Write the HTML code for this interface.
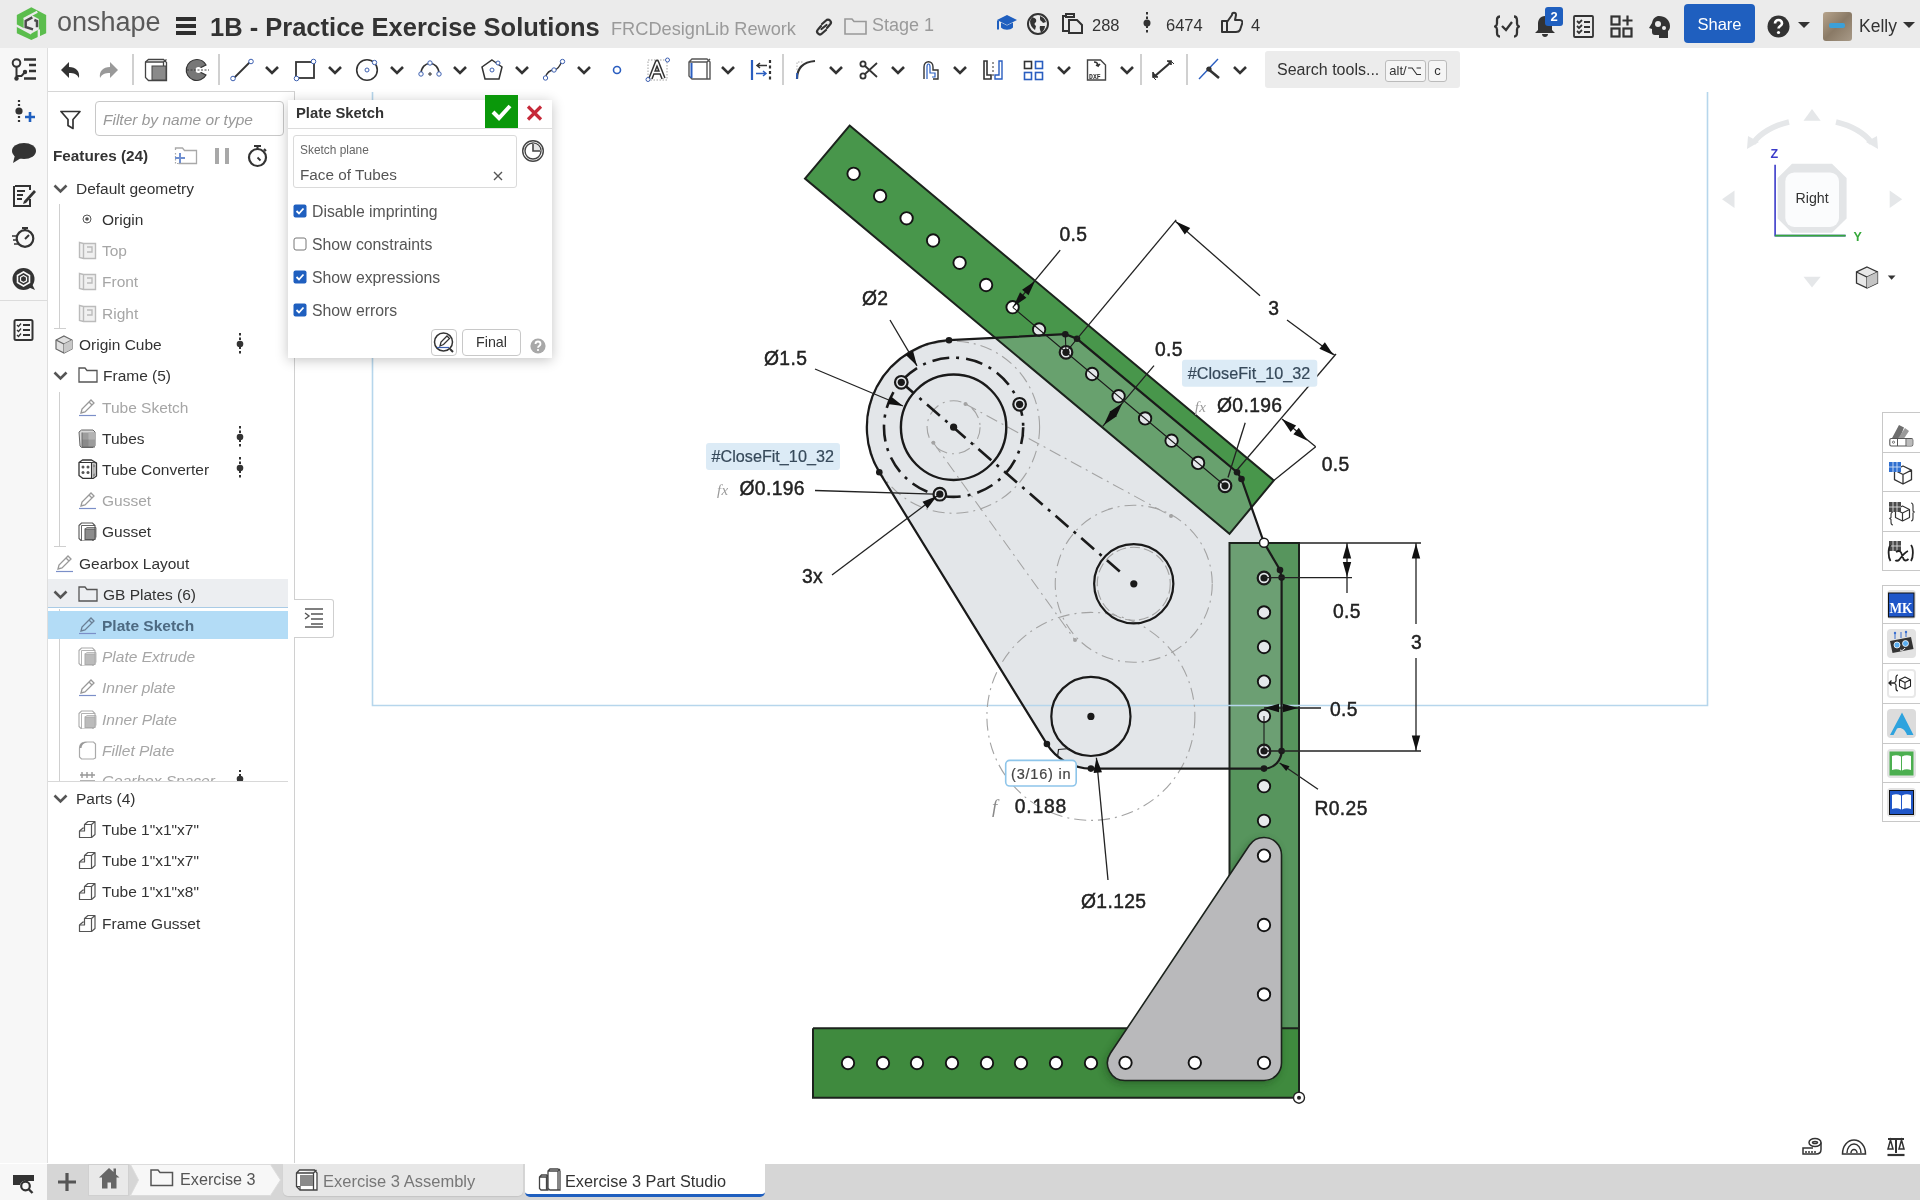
<!DOCTYPE html>
<html><head><meta charset="utf-8">
<style>
*{box-sizing:border-box;margin:0;padding:0}
html,body{width:1920px;height:1200px;overflow:hidden;background:#fff;font-family:"Liberation Sans",sans-serif;color:#333;position:relative}
.a{position:absolute}
#top{left:0;top:0;width:1920px;height:48px;background:#ebebeb}
#tb{left:48px;top:48px;width:1872px;height:44px;background:#fff}
.t{position:absolute;white-space:nowrap;line-height:1}
.row{position:absolute;font-size:15px;white-space:nowrap;line-height:1;color:#333}

.t,svg,.tx{will-change:transform}

</style></head><body>
<div id="top" class="a">
 <svg class="a" style="left:12px;top:4px" width="40" height="40" viewBox="0 0 1200 1200">
  <polygon points="580,95 1025,330 1025,880 580,1080 145,880 145,330" fill="#5bbd4d"/>
  <polygon points="580,330 805,450 805,765 580,885 350,765 350,450" fill="#ebebeb"/>
  <path d="M350,450 L760,235" stroke="#ebebeb" stroke-width="70"/>
  <path d="M580,885 L120,640" stroke="#ebebeb" stroke-width="70"/>
  <path d="M805,765 L805,1060" stroke="#ebebeb" stroke-width="70"/>
  <path d="M610,400 L410,510 L410,690 L630,760" fill="none" stroke="#4a4a4a" stroke-width="75"/>
  <path d="M670,480 L750,510 L750,700" fill="none" stroke="#4a4a4a" stroke-width="75"/>
 </svg>
 <div class="t" style="left:57px;top:9px;font-size:27px;color:#5a5a5a">onshape</div>
 <div class="a" style="left:176px;top:17px;width:20px;height:4px;background:#2e2e2e"></div>
 <div class="a" style="left:176px;top:24px;width:20px;height:4px;background:#2e2e2e"></div>
 <div class="a" style="left:176px;top:31px;width:20px;height:4px;background:#2e2e2e"></div>
 <div class="t" style="left:210px;top:15px;font-size:25.5px;font-weight:bold;color:#333">1B - Practice Exercise Solutions</div>
 <div class="t" style="left:611px;top:20px;font-size:18.2px;color:#9a9a9a">FRCDesignLib Rework</div>
 <svg class="a" style="left:814px;top:18px" width="20" height="18" viewBox="0 0 20 18"><g fill="none" stroke="#333" stroke-width="2.2" stroke-linecap="round"><path d="M8,6 L12,2.5 a2.8,2.8 0 0 1 4,4 L13,10"/><path d="M12,12 L8,15.5 a2.8,2.8 0 0 1 -4,-4 L7,8"/><path d="M7.5,11 L12.5,7"/></g></svg>
 <svg class="a" style="left:844px;top:17px" width="23" height="18" viewBox="0 0 23 18"><path d="M1,2 h7 l2,2.5 h12 v12.5 h-21 z" fill="none" stroke="#999" stroke-width="1.6"/></svg>
 <div class="t" style="left:872px;top:16px;font-size:18px;color:#9a9a9a">Stage 1</div>
 <svg class="a" style="left:996px;top:14px" width="22" height="19" viewBox="0 0 22 19"><path d="M11,1 L21,6 L11,11 L1,6 Z" fill="#1f5fbf"/><path d="M5,8.5 v5 c3,3 9,3 12,0 v-5 l-6,3 z" fill="#1f5fbf"/><path d="M2,6.5 v9" stroke="#1f5fbf" stroke-width="2"/></svg>
 <svg class="a" style="left:1026px;top:13px" width="24" height="22" viewBox="0 0 24 22"><circle cx="12" cy="11" r="10" fill="none" stroke="#333" stroke-width="2"/><path d="M6,4 c3,1 5,2 4,5 c-2,1 -2,3 0,4 l-1,4 c-3,-2 -5,-5 -5,-9z M14,3 c3,1 5,3 6,6 l-3,1 c-1,-2 -3,-2 -3,-4z M14,13 l5,0 c0,3 -2,5 -4,7 c0,-2 -2,-4 -1,-7z" fill="#333"/></svg>
 <svg class="a" style="left:1061px;top:12px" width="23" height="22" viewBox="0 0 23 22"><g fill="none" stroke="#333" stroke-width="2"><path d="M5,4 h-3 v15 h6"/><path d="M5,2 h8 v3 h-8 z"/><path d="M8,8 h8 l5,5 v8 h-13 z"/></g></svg>
 <div class="t" style="left:1092px;top:17px;font-size:16.5px;color:#333">288</div>
 <svg class="a" style="left:1142px;top:12px" width="10" height="22" viewBox="0 0 10 22"><path d="M5,0 v22" stroke="#333" stroke-width="2" stroke-dasharray="2.5,2"/><circle cx="5" cy="11" r="3.5" fill="#333"/></svg>
 <div class="t" style="left:1166px;top:17px;font-size:16.5px;color:#333">6474</div>
 <svg class="a" style="left:1220px;top:11px" width="23" height="23" viewBox="0 0 23 23"><path d="M2,10 h5 v11 h-5 z M7,11 l5,-7 c0,-3 4,-3 4,0 l-1,5 h5 c2,0 3,2 2,4 l-2,6 c-1,2 -2,2 -4,2 h-9" fill="none" stroke="#333" stroke-width="2" stroke-linejoin="round"/></svg>
 <div class="t" style="left:1251px;top:17px;font-size:16.5px;color:#333">4</div>
 <svg class="a" style="left:1494px;top:15px" width="26" height="23" viewBox="0 0 26 23"><g fill="none" stroke="#333" stroke-width="2.3"><path d="M6,1.5 c-3,0 -3,2 -3,4 v3 c0,2 -2,3 -2,3 c0,0 2,1 2,3 v3 c0,2 0,4 3,4"/><path d="M20,1.5 c3,0 3,2 3,4 v3 c0,2 2,3 2,3 c0,0 -2,1 -2,3 v3 c0,2 0,4 -3,4"/><path d="M8,11 l4,4 l6,-8"/></g></svg>
 <svg class="a" style="left:1534px;top:14px" width="22" height="24" viewBox="0 0 22 24"><path d="M11,2 c-5,0 -7,4 -7,8 v6 l-3,3 h20 l-3,-3 v-6 c0,-4 -2,-8 -7,-8z M8,20 c0,2 1.5,3 3,3 s3,-1 3,-3z" fill="#333"/></svg>
 <div class="a tx" style="left:1545px;top:7px;width:18px;height:19px;background:#1f5fbf;border-radius:3px;color:#fff;font-size:13px;font-weight:bold;text-align:center;line-height:19px">2</div>
 <svg class="a" style="left:1573px;top:15px" width="21" height="23" viewBox="0 0 21 23"><g fill="none" stroke="#333" stroke-width="1.8"><rect x="1" y="1" width="19" height="21" rx="1"/><path d="M4,6 l2,2 l3,-3 M11,7 h6 M4,11 l2,2 l3,-3 M11,12 h6 M4,16 l2,2 l3,-3 M11,17 h6"/></g></svg>
 <svg class="a" style="left:1610px;top:15px" width="24" height="23" viewBox="0 0 24 23"><g fill="none" stroke="#333" stroke-width="2.2"><rect x="1.5" y="1.5" width="8" height="8"/><rect x="1.5" y="13.5" width="8" height="8"/><rect x="13.5" y="13.5" width="8" height="8"/><path d="M17.5,0.5 v10 M12.5,5.5 h10"/></g></svg>
 <svg class="a" style="left:1648px;top:15px" width="24" height="24" viewBox="0 0 24 24"><path d="M11,1 c6,0 11,4 11,10 c0,3 -1,4 -2,5 v7 h-9 v-3 h-4 c-2,0 -3,-1 -3,-3 v-3 l-3,-1 l3,-5 c1,-5 4,-7 7,-7z" fill="#333"/><circle cx="10" cy="9" r="3" fill="#ebebeb"/><circle cx="16" cy="13" r="2" fill="#ebebeb"/></svg>
 <div class="a tx" style="left:1684px;top:4px;width:71px;height:39px;background:#1f5fbf;border-radius:4px;color:#fff;font-size:16.5px;line-height:41px;text-align:center">Share</div>
 <svg class="a" style="left:1767px;top:15px" width="23" height="23" viewBox="0 0 23 23"><circle cx="11.5" cy="11.5" r="11" fill="#333"/><path d="M8,8.5 c0,-2 1.5,-3.5 3.5,-3.5 s3.5,1.5 3.5,3.5 c0,2.5 -3.5,2.5 -3.5,5" fill="none" stroke="#fff" stroke-width="2.6"/><circle cx="11.5" cy="17.5" r="1.6" fill="#fff"/></svg>
 <svg class="a" style="left:1798px;top:22px" width="12" height="7" viewBox="0 0 12 7"><path d="M0,0 h12 l-6,6z" fill="#333"/></svg>
 <div class="a" style="left:1823px;top:12px;width:29px;height:29px;border-radius:3px;background:linear-gradient(135deg,#b7a48c 0%,#8a7a66 50%,#a89a88 100%)"><div class="a" style="left:6px;top:11px;width:16px;height:5px;background:#3ca0d8;border-radius:2px"></div></div>
 <div class="t" style="left:1859px;top:17.5px;font-size:17.5px;color:#333">Kelly</div>
 <svg class="a" style="left:1903px;top:22px" width="12" height="7" viewBox="0 0 12 7"><path d="M0,0 h12 l-6,6z" fill="#333"/></svg>
</div>

<div id="tb" class="a">
 <!-- separators -->
 <div class="a" style="left:84px;top:6px;width:2px;height:31px;background:#d0d0d0"></div>
 <div class="a" style="left:170px;top:6px;width:2px;height:31px;background:#d0d0d0"></div>
 <div class="a" style="left:734px;top:6px;width:2px;height:31px;background:#d0d0d0"></div>
 <div class="a" style="left:1092px;top:6px;width:2px;height:31px;background:#d0d0d0"></div>
 <div class="a" style="left:1138px;top:6px;width:2px;height:31px;background:#d0d0d0"></div>
</div>
<svg class="a" style="left:0;top:48px" width="1480" height="44" viewBox="0 48 1480 44">
 
 <!-- undo/redo -->
 <path d="M61,70 L69,62 L69,67 C76,67 80,71 79,78 C77,74 74,73 69,73 L69,78 Z" fill="#333"/>
 <path d="M118,70 L110,62 L110,67 C103,67 99,71 100,78 C102,74 105,73 110,73 L110,78 Z" fill="#999"/>
 <!-- extrude -->
 <g fill="none" stroke="#444" stroke-width="1.3"><path d="M145.5,62 l3,-2.5 h15 l3,3 v18 h-18 l-3,-3 z"/><path d="M145.5,62 h18 l3,-2.5 M163.5,62 v18"/></g>
 <rect x="152" y="66" width="14" height="14" fill="#8a8a8a" stroke="#444" stroke-width="1"/>
 <!-- revolve -->
 <path d="M197,59.5 a10.5,10.5 0 1 0 9,15.5 l-6,-3 a3,3 0 0 1 0,-4 l6,-3 a10.5,10.5 0 0 0 -9,-5.5z" fill="#777" stroke="#333" stroke-width="1.2"/>
 <circle cx="198.5" cy="70" r="3" fill="#fff"/><path d="M187,70 h22" stroke="#333" stroke-width="0.9" stroke-dasharray="2,1.5"/>
 <!-- line -->
 <path d="M233,79 L251,61" stroke="#333" stroke-width="1.8"/><circle cx="233" cy="78.5" r="2.3" fill="#fff" stroke="#3c5fb0" stroke-width="1"/><circle cx="251" cy="61.5" r="2.3" fill="#fff" stroke="#3c5fb0" stroke-width="1"/>
 <path d="M266,67 L272,73 L278,67" fill="none" stroke="#333" stroke-width="2.6"/>
 <!-- rect -->
 <rect x="296" y="62" width="18" height="16" fill="none" stroke="#333" stroke-width="1.8"/><circle cx="296.5" cy="78.5" r="2.3" fill="#fff" stroke="#3c5fb0" stroke-width="1"/><circle cx="313.5" cy="61.5" r="2.3" fill="#fff" stroke="#3c5fb0" stroke-width="1"/>
 <path d="M329,67 L335,73 L341,67" fill="none" stroke="#333" stroke-width="2.6"/>
 <!-- circle -->
 <circle cx="367" cy="70" r="10.3" fill="none" stroke="#333" stroke-width="1.6"/><circle cx="367" cy="70" r="2" fill="none" stroke="#3c5fb0" stroke-width="1"/><circle cx="374.5" cy="62.5" r="2.2" fill="#fff" stroke="#3c5fb0" stroke-width="1"/>
 <path d="M391,67 L397,73 L403,67" fill="none" stroke="#333" stroke-width="2.6"/>
 <!-- arc -->
 <path d="M421,74 C421,60 439,60 439,74" fill="none" stroke="#333" stroke-width="1.6"/><circle cx="421" cy="74" r="2.2" fill="#fff" stroke="#3c5fb0" stroke-width="1"/><circle cx="439" cy="74" r="2.2" fill="#fff" stroke="#3c5fb0" stroke-width="1"/><circle cx="430" cy="63" r="2.2" fill="#fff" stroke="#3c5fb0" stroke-width="1"/><path d="M430,72 v4 M428,74 h4" stroke="#333" stroke-width="1"/>
 <path d="M454,67 L460,73 L466,67" fill="none" stroke="#333" stroke-width="2.6"/>
 <!-- polygon -->
 <path d="M492,60 L502,67 L499,79 L485,79 L482,67 Z" fill="none" stroke="#333" stroke-width="1.5"/><circle cx="492" cy="70" r="2" fill="none" stroke="#3c5fb0" stroke-width="1"/><circle cx="498" cy="63" r="2" fill="#fff" stroke="#3c5fb0" stroke-width="1"/>
 <path d="M516,67 L522,73 L528,67" fill="none" stroke="#333" stroke-width="2.6"/>
 <!-- spline -->
 <path d="M545,78 C547,72 550,70 554,70 C558,70 560,66 562,61" fill="none" stroke="#333" stroke-width="1.4"/><circle cx="545.5" cy="78" r="2.2" fill="#fff" stroke="#3c5fb0" stroke-width="1"/><circle cx="554" cy="70" r="2.2" fill="#fff" stroke="#3c5fb0" stroke-width="1"/><circle cx="562.5" cy="61.5" r="2.2" fill="#fff" stroke="#3c5fb0" stroke-width="1"/>
 <path d="M578,67 L584,73 L590,67" fill="none" stroke="#333" stroke-width="2.6"/>
 <!-- point -->
 <circle cx="617" cy="70" r="3.5" fill="none" stroke="#2a5ec0" stroke-width="1.6"/>
 <!-- text A -->
 <rect x="648" y="60" width="19" height="20" fill="none" stroke="#888" stroke-width="0.8" stroke-dasharray="1.5,1.5"/>
 <path d="M650.5,78.5 L657,62 L663.5,78.5 M653.5,72.5 h7" fill="none" stroke="#333" stroke-width="4.6" stroke-linejoin="round"/><path d="M650.5,78.5 L657,62 L663.5,78.5 M653.5,72.5 h7" fill="none" stroke="#fff" stroke-width="1.6" stroke-linejoin="round"/>
 <circle cx="648" cy="79.5" r="2" fill="#fff" stroke="#3c5fb0" stroke-width="1"/><circle cx="667.5" cy="60" r="2" fill="#fff" stroke="#3c5fb0" stroke-width="1"/>
 <!-- construction/box -->
 <path d="M689,62 l3,-3 h15 l3,3 v17 h-18 l-3,-3z M689,62 h18 l3,-3 M707,62 v17" fill="none" stroke="#555" stroke-width="1.4"/><path d="M691.5,63 v15" stroke="#2a5ec0" stroke-width="2"/>
 <path d="M722,67 L728,73 L734,67" fill="none" stroke="#333" stroke-width="2.6"/>
 <!-- offset -->
 <path d="M752,60 v20" stroke="#2a5ec0" stroke-width="2.2"/><path d="M770,60 v20" stroke="#333" stroke-width="2.2" stroke-dasharray="3,2.5"/><path d="M767,65.5 h-9 M760,63 l-3,2.5 l3,2.5" fill="none" stroke="#333" stroke-width="1.5"/><path d="M756,73.5 h9 M763,71 l3,2.5 l-3,2.5" fill="none" stroke="#2a5ec0" stroke-width="1.5"/>
 <!-- fillet -->
 <path d="M797,79 C797,68 803,62 815,61" fill="none" stroke="#333" stroke-width="2.2"/><path d="M797,73 v6" stroke="#2a5ec0" stroke-width="1.6"/><path d="M797,70 v-8 h6" fill="none" stroke="#999" stroke-width="0.8" stroke-dasharray="1.5,1.5"/>
 <path d="M830,67 L836,73 L842,67" fill="none" stroke="#333" stroke-width="2.6"/>
 <!-- trim scissors -->
 <g fill="none" stroke="#333" stroke-width="1.8"><circle cx="863" cy="64" r="2.6"/><circle cx="863" cy="76" r="2.6"/><path d="M865,66 L877,77 M865,74 L877,63"/></g>
 <path d="M892,67 L898,73 L904,67" fill="none" stroke="#333" stroke-width="2.6"/>
 <!-- extend -->
 <path d="M924,79 v-12 c0,-7 9,-7 9,0 v3 h5 v9 h-5" fill="none" stroke="#333" stroke-width="1.4"/><path d="M927,79 v-12 c0,-4 3,-4 3,0 v6 h5 v4 h-3" fill="none" stroke="#2a5ec0" stroke-width="1.2"/>
 <path d="M954,67 L960,73 L966,67" fill="none" stroke="#333" stroke-width="2.6"/>
 <!-- mirror -->
 <path d="M984,61 h3 v14 h4 v4 h-7 z" fill="none" stroke="#333" stroke-width="1.6"/><path d="M1002,61 h-3 v14 h-4 v4 h7 z" fill="none" stroke="#2a5ec0" stroke-width="1.4"/><path d="M993,62 v16" stroke="#333" stroke-width="1" stroke-dasharray="2,2"/>
 <!-- pattern -->
 <g fill="none" stroke-width="1.6"><rect x="1024.5" y="61.5" width="7" height="7" stroke="#333"/><rect x="1035.5" y="61.5" width="7" height="7" stroke="#2a5ec0"/><rect x="1024.5" y="72.5" width="7" height="7" stroke="#2a5ec0"/><rect x="1035.5" y="72.5" width="7" height="7" stroke="#2a5ec0"/></g>
 <path d="M1058,67 L1064,73 L1070,67" fill="none" stroke="#333" stroke-width="2.6"/>
 <!-- dxf -->
 <path d="M1087.5,60 h13 l5,5 v15 h-18 z" fill="#fff" stroke="#444" stroke-width="1.4"/><path d="M1094,62 c2,0 4,1 4,4 l-2,-1 M1098,66 l2,-2" fill="none" stroke="#333" stroke-width="1.6"/><text x="1089" y="78.5" font-size="6.5" font-weight="bold" font-family="Liberation Mono" fill="#333">DXF</text>
 <path d="M1121,67 L1127,73 L1133,67" fill="none" stroke="#333" stroke-width="2.6"/>
 <!-- dimension -->
 <path d="M1155,76 L1170,63" stroke="#333" stroke-width="2.2"/><path d="M1153,72 v5 h5 M1167,61 h4 v4" fill="#333" stroke="#333" stroke-width="1.6"/><path d="M1153,77 l3,3 M1171,61 l3,3" stroke="#333" stroke-width="1"/>
 <!-- constraint -->
 <path d="M1199,79 L1218,59" stroke="#2a5ec0" stroke-width="1.4"/><path d="M1207,68 L1219,78" stroke="#333" stroke-width="2.6"/><circle cx="1209" cy="69" r="2.6" fill="#333"/>
 <path d="M1234,67 L1240,73 L1246,67" fill="none" stroke="#333" stroke-width="2.6"/>
</svg>
<div class="a" style="left:1265px;top:51px;width:195px;height:37px;background:#ececec;border-radius:3px"></div>
<div class="t" style="left:1277px;top:62px;font-size:16px;color:#333">Search tools...</div>
<div class="a tx" style="left:1385px;top:60px;width:41px;height:22px;border:1px solid #bbb;border-radius:3px;background:#f5f5f5;font-size:13px;color:#333;line-height:20px;text-align:center">alt/&#x2325;</div>
<div class="a tx" style="left:1428px;top:60px;width:19px;height:22px;border:1px solid #bbb;border-radius:3px;background:#f5f5f5;font-size:13px;color:#333;line-height:20px;text-align:center">c</div>
<svg class="a" style="left:0;top:0" width="1920" height="1200" viewBox="0 0 1920 1200" font-family="Liberation Sans">
<defs><clipPath id="cp"><path d="M949,340.2 L1065.3,334.2 L1077,338.8 L1237,472.25 L1241.5,479 L1264,542.75 L1280,570 L1281.6,577.6 L1281.6,751 A17.6,17.6 0 0 1 1264,768.6 L1090.9,768.6 A52.3,52.3 0 0 1 1046.6,743.7 L879.3,472.2 A87.2,87.2 0 0 1 949,340.2 Z"/></clipPath>
<clipPath id="tc"><rect x="1229.5" y="543" width="69.5" height="485.3"/><rect x="813" y="1028.3" width="486" height="69.4"/></clipPath>
<filter id="sh" x="-20%" y="-20%" width="140%" height="140%"><feGaussianBlur stdDeviation="4"/></filter></defs>
<path d="M949,340.2 L1065.3,334.2 L1077,338.8 L1237,472.25 L1241.5,479 L1264,542.75 L1280,570 L1281.6,577.6 L1281.6,751 A17.6,17.6 0 0 1 1264,768.6 L1090.9,768.6 A52.3,52.3 0 0 1 1046.6,743.7 L879.3,472.2 A87.2,87.2 0 0 1 949,340.2 Z" fill="#e3e6e9"/>
<polygon points="849.6,125.6 1273.8,480.5 1229.5,533.8 805.0,178.6" fill="#48964b"/>
<rect x="1229.5" y="543" width="69.5" height="485.3" fill="#57955d"/>
<rect x="813" y="1028.3" width="486" height="69.4" fill="#3f8a3e"/>
<g clip-path="url(#cp)"><polygon points="849.6,125.6 1273.8,480.5 1229.5,533.8 805.0,178.6" fill="#68a16e"/><rect x="1229.5" y="543" width="69.5" height="485.3" fill="#6c9f73"/></g>
<polygon points="849.6,125.6 1273.8,480.5 1229.5,533.8 805.0,178.6" fill="none" stroke="#1c231d" stroke-width="2"/>
<path d="M1229.5,1028.3 V543 H1299 V1097.7" fill="none" stroke="#1c231d" stroke-width="2"/>
<path d="M813,1028.3 H1299 M813,1028.3 V1097.7 H1299" fill="none" stroke="#1c231d" stroke-width="2"/>
<circle cx="853.6" cy="173.8" r="6.2" fill="#fff" stroke="#141414" stroke-width="1.9"/>
<circle cx="880.1" cy="196.0" r="6.2" fill="#fff" stroke="#141414" stroke-width="1.9"/>
<circle cx="906.6" cy="218.3" r="6.2" fill="#fff" stroke="#141414" stroke-width="1.9"/>
<circle cx="933.1" cy="240.5" r="6.2" fill="#fff" stroke="#141414" stroke-width="1.9"/>
<circle cx="959.6" cy="262.8" r="6.2" fill="#fff" stroke="#141414" stroke-width="1.9"/>
<circle cx="986.1" cy="285.0" r="6.2" fill="#fff" stroke="#141414" stroke-width="1.9"/>
<circle cx="1012.6" cy="307.2" r="6.2" fill="#fff" stroke="#141414" stroke-width="1.9"/>
<circle cx="1039.1" cy="329.5" r="6.2" fill="#e4e7ea" stroke="#141414" stroke-width="1.9"/>
<circle cx="1092.1" cy="374.0" r="6.2" fill="#e4e7ea" stroke="#141414" stroke-width="1.9"/>
<circle cx="1118.6" cy="396.2" r="6.2" fill="#e4e7ea" stroke="#141414" stroke-width="1.9"/>
<circle cx="1145.1" cy="418.4" r="6.2" fill="#e4e7ea" stroke="#141414" stroke-width="1.9"/>
<circle cx="1171.6" cy="440.7" r="6.2" fill="#e4e7ea" stroke="#141414" stroke-width="1.9"/>
<circle cx="1198.1" cy="462.9" r="6.2" fill="#e4e7ea" stroke="#141414" stroke-width="1.9"/>
<circle cx="1264.0" cy="612.4" r="6.2" fill="#e4e7ea" stroke="#141414" stroke-width="1.9"/>
<circle cx="1264.0" cy="647.0" r="6.2" fill="#e4e7ea" stroke="#141414" stroke-width="1.9"/>
<circle cx="1264.0" cy="681.6" r="6.2" fill="#e4e7ea" stroke="#141414" stroke-width="1.9"/>
<circle cx="1264.0" cy="716.0" r="6.2" fill="#e4e7ea" stroke="#141414" stroke-width="1.9"/>
<circle cx="1264.0" cy="786.2" r="6.2" fill="#e8eaec" stroke="#141414" stroke-width="1.9"/>
<circle cx="1264.0" cy="820.8" r="6.2" fill="#e8eaec" stroke="#141414" stroke-width="1.9"/>
<circle cx="848.0" cy="1063.0" r="6.2" fill="#fff" stroke="#141414" stroke-width="1.9"/>
<circle cx="883.0" cy="1063.0" r="6.2" fill="#fff" stroke="#141414" stroke-width="1.9"/>
<circle cx="917.0" cy="1063.0" r="6.2" fill="#fff" stroke="#141414" stroke-width="1.9"/>
<circle cx="952.0" cy="1063.0" r="6.2" fill="#fff" stroke="#141414" stroke-width="1.9"/>
<circle cx="987.0" cy="1063.0" r="6.2" fill="#fff" stroke="#141414" stroke-width="1.9"/>
<circle cx="1021.0" cy="1063.0" r="6.2" fill="#fff" stroke="#141414" stroke-width="1.9"/>
<circle cx="1056.0" cy="1063.0" r="6.2" fill="#fff" stroke="#141414" stroke-width="1.9"/>
<circle cx="1091.0" cy="1063.0" r="6.2" fill="#fff" stroke="#141414" stroke-width="1.9"/>
<g clip-path="url(#tc)"><path d="M1264,837.5 A17.5,17.5 0 0 1 1281.5,855 V1063 A17.5,17.5 0 0 1 1264,1080.5 H1125 A17.5,17.5 0 0 1 1110.4,1053.3 L1249.4,845.3 A17.5,17.5 0 0 1 1264,837.5 Z" fill="#163d16" opacity="0.45" filter="url(#sh)" transform="translate(-2,3)"/></g>
<path d="M1264,837.5 A17.5,17.5 0 0 1 1281.5,855 V1063 A17.5,17.5 0 0 1 1264,1080.5 H1125 A17.5,17.5 0 0 1 1110.4,1053.3 L1249.4,845.3 A17.5,17.5 0 0 1 1264,837.5 Z" fill="#b9b9bb" stroke="#1c231d" stroke-width="1.6"/>
<circle cx="1264.0" cy="855.6" r="6.2" fill="#fff" stroke="#141414" stroke-width="1.9"/>
<circle cx="1264.0" cy="925.0" r="6.2" fill="#fff" stroke="#141414" stroke-width="1.9"/>
<circle cx="1264.0" cy="994.4" r="6.2" fill="#fff" stroke="#141414" stroke-width="1.9"/>
<circle cx="1125.5" cy="1062.8" r="6.2" fill="#fff" stroke="#141414" stroke-width="1.9"/>
<circle cx="1194.8" cy="1062.8" r="6.2" fill="#fff" stroke="#141414" stroke-width="1.9"/>
<circle cx="1264.0" cy="1062.8" r="6.2" fill="#fff" stroke="#141414" stroke-width="1.9"/>
<circle cx="1299" cy="1097.7" r="5.5" fill="#fff" stroke="#222" stroke-width="1.4"/><circle cx="1299" cy="1097.7" r="2" fill="#222"/>
<path d="M372.5,92 V705.5 H1707.5 V92" fill="none" stroke="#b6d6ec" stroke-width="1.6"/>
<circle cx="953.6" cy="427.25" r="86" fill="none" stroke="#a3a3a3" stroke-width="1.1" stroke-dasharray="12,5,2,5"/>
<circle cx="953.6" cy="427.25" r="26.5" fill="none" stroke="#a3a3a3" stroke-width="1.1" stroke-dasharray="12,5,2,5"/>
<circle cx="1133.75" cy="583.75" r="78.5" fill="none" stroke="#a3a3a3" stroke-width="1.1" stroke-dasharray="12,5,2,5"/>
<circle cx="1133.75" cy="583.75" r="36.5" fill="none" stroke="#a3a3a3" stroke-width="1.1" stroke-dasharray="10,4"/>
<circle cx="1090.9" cy="716.4" r="104" fill="none" stroke="#a3a3a3" stroke-width="1.1" stroke-dasharray="12,5,2,5"/>
<path d="M965.5,404 L1171,516" fill="none" stroke="#a3a3a3" stroke-width="1.1" stroke-dasharray="12,5,2,5"/>
<path d="M933.4,442.8 L1075,640" fill="none" stroke="#a3a3a3" stroke-width="1.1" stroke-dasharray="12,5,2,5"/>
<circle cx="1171" cy="516" r="2" fill="#a3a3a3"/><circle cx="965.5" cy="404" r="2" fill="#a3a3a3"/><circle cx="933.4" cy="442.8" r="2" fill="#a3a3a3"/><circle cx="1075" cy="640" r="2" fill="#a3a3a3"/>
<path d="M949,340.2 L1065.3,334.2 L1077,338.8 L1237,472.25 L1241.5,479 L1264,542.75 L1280,570 L1281.6,577.6 L1281.6,751 A17.6,17.6 0 0 1 1264,768.6 L1090.9,768.6 A52.3,52.3 0 0 1 1046.6,743.7 L879.3,472.2 A87.2,87.2 0 0 1 949,340.2 Z" fill="none" stroke="#1a1a1a" stroke-width="2.2"/>
<circle cx="953.6" cy="427.25" r="52.7" fill="none" stroke="#1a1a1a" stroke-width="2.4"/>
<circle cx="953.6" cy="427.25" r="69.6" fill="none" stroke="#1a1a1a" stroke-width="2.6" stroke-dasharray="17,7,3,7"/>
<circle cx="1133.75" cy="583.75" r="39.6" fill="none" stroke="#1a1a1a" stroke-width="2.2"/>
<circle cx="1090.9" cy="716.4" r="39.6" fill="none" stroke="#1a1a1a" stroke-width="2.2"/>
<path d="M901.3,382.3 L1125,576" fill="none" stroke="#1a1a1a" stroke-width="2.6" stroke-dasharray="17,7,3,7"/>
<circle cx="953.6" cy="427.2" r="3.6" fill="#1a1a1a"/>
<circle cx="1133.8" cy="583.8" r="3.6" fill="#1a1a1a"/>
<circle cx="1090.9" cy="716.4" r="3.6" fill="#1a1a1a"/>
<circle cx="901.3" cy="382.3" r="6.3" fill="#e4e7ea" stroke="#1a1a1a" stroke-width="2.2"/><circle cx="901.3" cy="382.3" r="3.6" fill="#1a1a1a"/>
<circle cx="1019.6" cy="404.3" r="6.3" fill="#e4e7ea" stroke="#1a1a1a" stroke-width="2.2"/><circle cx="1019.6" cy="404.3" r="3.6" fill="#1a1a1a"/>
<circle cx="939.8" cy="494.2" r="6.3" fill="#e4e7ea" stroke="#1a1a1a" stroke-width="2.2"/><circle cx="939.8" cy="494.2" r="3.6" fill="#1a1a1a"/>
<circle cx="1066.0" cy="352.3" r="6.3" fill="#e4e7ea" stroke="#1a1a1a" stroke-width="2.2"/><circle cx="1066.0" cy="352.3" r="3.6" fill="#1a1a1a"/>
<circle cx="1225.0" cy="485.8" r="6.3" fill="#e4e7ea" stroke="#1a1a1a" stroke-width="2.2"/><circle cx="1225.0" cy="485.8" r="3.6" fill="#1a1a1a"/>
<circle cx="1264.0" cy="578.0" r="6.3" fill="#e4e7ea" stroke="#1a1a1a" stroke-width="2.2"/><circle cx="1264.0" cy="578.0" r="3.6" fill="#1a1a1a"/>
<circle cx="1264.0" cy="751.0" r="6.3" fill="#e4e7ea" stroke="#1a1a1a" stroke-width="2.2"/><circle cx="1264.0" cy="751.0" r="3.6" fill="#1a1a1a"/>
<path d="M1012.8,307.3 L1225,485.75" fill="none" stroke="#1a1a1a" stroke-width="1.1"/>
<path d="M1264,716 V751" fill="none" stroke="#1a1a1a" stroke-width="1.1"/>
<path d="M1065.3,334.2 L1066,352.3 L1077,338.8" fill="none" stroke="#1a1a1a" stroke-width="1.1"/>
<circle cx="949.0" cy="340.2" r="3.3" fill="#1a1a1a"/>
<circle cx="879.3" cy="472.2" r="3.3" fill="#1a1a1a"/>
<circle cx="1065.3" cy="334.2" r="3.3" fill="#1a1a1a"/>
<circle cx="1077.0" cy="338.8" r="3.3" fill="#1a1a1a"/>
<circle cx="1237.0" cy="472.2" r="3.3" fill="#1a1a1a"/>
<circle cx="1241.5" cy="479.0" r="3.3" fill="#1a1a1a"/>
<circle cx="1280.0" cy="570.0" r="3.3" fill="#1a1a1a"/>
<circle cx="1281.6" cy="577.6" r="3.3" fill="#1a1a1a"/>
<circle cx="1281.6" cy="751.0" r="3.3" fill="#1a1a1a"/>
<circle cx="1264.0" cy="768.6" r="3.3" fill="#1a1a1a"/>
<circle cx="1090.9" cy="768.6" r="3.3" fill="#1a1a1a"/>
<circle cx="1046.9" cy="744.0" r="3.3" fill="#1a1a1a"/>
<circle cx="1264" cy="542.75" r="4.5" fill="#fff" stroke="#1a1a1a" stroke-width="1.5"/>
<path d="M1057.5,757 L1058.5,749.5 L1070,748.5" fill="none" stroke="#222" stroke-width="1.2"/>
<path d="M1060.2,250.2 L1012.8,307.3" fill="none" stroke="#222" stroke-width="1.3"/>
<polygon points="1013.5,306.5 1020.0,292.3 1026.4,297.7" fill="#111"/><polygon points="1035.0,281.0 1028.5,295.2 1022.1,289.8" fill="#111"/>
<path d="M1077.0,338.8 L1176.2,219.8" fill="none" stroke="#222" stroke-width="1.3"/>
<path d="M1336.0,354.0 L1237.0,470.0" fill="none" stroke="#222" stroke-width="1.3"/>
<path d="M1175.0,221.0 L1260.0,295.7" fill="none" stroke="#222" stroke-width="1.3"/><path d="M1287.0,320.0 L1334.8,355.2" fill="none" stroke="#222" stroke-width="1.3"/>
<polygon points="1176.0,221.5 1190.2,227.9 1184.8,234.4" fill="#111"/><polygon points="1333.6,355.2 1319.4,348.7 1324.9,342.3" fill="#111"/>
<path d="M1154.0,365.7 L1102.7,426.3" fill="none" stroke="#222" stroke-width="1.3"/>
<polygon points="1103.8,425.0 1110.3,410.9 1116.7,416.3" fill="#111"/><polygon points="1122.5,403.0 1116.0,417.1 1109.6,411.7" fill="#111"/>
<path d="M1315.7,446.8 L1273.8,480.5" fill="none" stroke="#222" stroke-width="1.3"/>
<path d="M1282.0,419.0 L1315.7,446.8" fill="none" stroke="#222" stroke-width="1.3"/>
<polygon points="1282.0,419.0 1296.1,425.5 1290.7,431.9" fill="#111"/><polygon points="1307.5,440.8 1293.4,434.2 1298.8,427.8" fill="#111"/>
<path d="M1245.2,422.8 L1228.0,477.5" fill="none" stroke="#222" stroke-width="1.3"/>
<path d="M890.0,320.0 L917.0,365.8" fill="none" stroke="#222" stroke-width="1.3"/><polygon points="917.0,365.8 905.8,355.0 913.0,350.7" fill="#111"/>
<path d="M815.0,369.0 L903.0,406.0" fill="none" stroke="#222" stroke-width="1.3"/><polygon points="903.0,406.0 887.5,404.1 890.8,396.3" fill="#111"/>
<path d="M815.0,490.5 L934.3,494.2" fill="none" stroke="#222" stroke-width="1.3"/>
<path d="M832.0,575.0 L937.0,496.0" fill="none" stroke="#222" stroke-width="1.3"/><polygon points="937.0,496.0 927.5,508.4 922.5,501.7" fill="#111"/>
<path d="M1299.0,543.0 L1421.0,543.0" fill="none" stroke="#222" stroke-width="1.3"/>
<path d="M1264.0,577.6 L1352.0,577.6" fill="none" stroke="#222" stroke-width="1.3"/>
<path d="M1264.0,751.0 L1421.0,751.0" fill="none" stroke="#222" stroke-width="1.3"/>
<path d="M1347.0,543.0 L1347.0,593.0" fill="none" stroke="#222" stroke-width="1.3"/>
<polygon points="1347.0,543.5 1351.2,558.5 1342.8,558.5" fill="#111"/><polygon points="1347.0,577.0 1342.8,562.0 1351.2,562.0" fill="#111"/>
<path d="M1416.0,543.0 L1416.0,624.0" fill="none" stroke="#222" stroke-width="1.3"/><path d="M1416.0,658.0 L1416.0,751.0" fill="none" stroke="#222" stroke-width="1.3"/>
<polygon points="1416.0,543.5 1420.2,558.5 1411.8,558.5" fill="#111"/><polygon points="1416.0,750.5 1411.8,735.5 1420.2,735.5" fill="#111"/>
<path d="M1264.0,708.0 L1321.0,708.0" fill="none" stroke="#222" stroke-width="1.3"/>
<polygon points="1264.0,708.0 1279.0,703.8 1279.0,712.2" fill="#111"/><polygon points="1298.0,708.0 1283.0,712.2 1283.0,703.8" fill="#111"/>
<path d="M1279.6,763.0 L1318.0,789.3" fill="none" stroke="#222" stroke-width="1.3"/><polygon points="1279.6,763.0 1289.5,766.2 1286.2,771.1" fill="#111"/>
<path d="M1096.4,757.7 L1108.0,880.0" fill="none" stroke="#222" stroke-width="1.3"/><polygon points="1096.4,757.7 1102.0,772.2 1093.6,773.0" fill="#111"/>
<text x="1059.5" y="240.6" font-size="19.3" fill="#222" letter-spacing="0.35" stroke="#222" stroke-width="0.45" >0.5</text>
<text x="1268.3" y="315.3" font-size="19.3" fill="#222" letter-spacing="0.35" stroke="#222" stroke-width="0.45" >3</text>
<text x="1155.0" y="355.7" font-size="19.3" fill="#222" letter-spacing="0.35" stroke="#222" stroke-width="0.45" >0.5</text>
<text x="1321.8" y="470.5" font-size="19.3" fill="#222" letter-spacing="0.35" stroke="#222" stroke-width="0.45" >0.5</text>
<text x="862.0" y="304.5" font-size="19.3" fill="#222" letter-spacing="0.35" stroke="#222" stroke-width="0.45" >&#216;2</text>
<text x="764.0" y="364.5" font-size="19.3" fill="#222" letter-spacing="0.35" stroke="#222" stroke-width="0.45" >&#216;1.5</text>
<text x="802.0" y="582.5" font-size="19.3" fill="#222" letter-spacing="0.35" stroke="#222" stroke-width="0.45" >3x</text>
<text x="1333.0" y="617.9" font-size="19.3" fill="#222" letter-spacing="0.35" stroke="#222" stroke-width="0.45" >0.5</text>
<text x="1411.0" y="648.5" font-size="19.3" fill="#222" letter-spacing="0.35" stroke="#222" stroke-width="0.45" >3</text>
<text x="1330.0" y="715.5" font-size="19.3" fill="#222" letter-spacing="0.35" stroke="#222" stroke-width="0.45" >0.5</text>
<text x="1314.5" y="814.5" font-size="19.3" fill="#222" letter-spacing="0.35" stroke="#222" stroke-width="0.45" >R0.25</text>
<text x="1081.0" y="907.5" font-size="19.3" fill="#222" letter-spacing="0.35" stroke="#222" stroke-width="0.45" >&#216;1.125</text>
<rect x="1182" y="359.8" width="135.3" height="26.9" rx="3" fill="#dcebf6"/>
<text x="1187.8" y="379.0" font-size="16.2" fill="#36495a" letter-spacing="0.00" stroke="#36495a" stroke-width="0.20" >#CloseFit_10_32</text>
<rect x="706" y="443" width="134" height="26.9" rx="3" fill="#dcebf6"/>
<text x="711.5" y="462.2" font-size="16.2" fill="#36495a" letter-spacing="0.00" stroke="#36495a" stroke-width="0.20" >#CloseFit_10_32</text>
<text x="1194.8" y="411.7" font-size="15.0" fill="#9a9a9a" letter-spacing="0.35" font-style="italic" font-family="Liberation Serif">fx</text>
<text x="1217.0" y="411.7" font-size="19.3" fill="#222" letter-spacing="0.35" stroke="#222" stroke-width="0.45" >&#216;0.196</text>
<text x="717.0" y="494.5" font-size="15.0" fill="#9a9a9a" letter-spacing="0.35" font-style="italic" font-family="Liberation Serif">fx</text>
<text x="739.5" y="494.5" font-size="19.3" fill="#222" letter-spacing="0.35" stroke="#222" stroke-width="0.45" >&#216;0.196</text>
<rect x="1005.7" y="760.4" width="70.5" height="25.6" rx="4" fill="#fff" stroke="#8ec5ea" stroke-width="1.6"/>
<text x="1011.0" y="779.0" font-size="14.5" fill="#444" letter-spacing="0.80" stroke="#444" stroke-width="0.20" >(3/16) in</text>
<text x="992.0" y="813.2" font-size="19.0" fill="#8a8a8a" letter-spacing="0.35" font-style="italic" font-family="Liberation Serif">f</text>
<text x="1014.8" y="813.2" font-size="19.3" fill="#222" letter-spacing="0.80" stroke="#222" stroke-width="0.45" >0.188</text>
</svg><div class="a" style="left:0;top:48px;width:48px;height:1115px;background:#f7f7f7;border-right:1px solid #dedede"></div>
<div class="a" style="left:0;top:300px;width:47px;height:1px;background:#dcdcdc"></div>
<svg class="a" style="left:0;top:48px" width="48" height="1115" viewBox="0 48 48 1115">
 <!-- tree icon -->
 <g fill="none" stroke="#333" stroke-width="2"><circle cx="16.5" cy="63" r="3.8"/><path d="M16.5,67 v12"/><path d="M16.5,76 h5 l4,-4.5"/><path d="M24,59.5 h12 M29,65 h7 M29,71 h7 M24,78.5 h12" stroke-width="2.4"/></g>
 <circle cx="16.5" cy="78.5" r="2.2" fill="#333"/><circle cx="25" cy="72" r="2.2" fill="#333"/>
 <!-- branch plus -->
 <path d="M19,100 v24" stroke="#333" stroke-width="2.2" stroke-dasharray="2,2"/><circle cx="19" cy="111" r="3.6" fill="#333"/>
 <path d="M30,112 v10 M25,117 h10" stroke="#1f5fbf" stroke-width="2.6"/>
 <!-- speech -->
 <ellipse cx="24" cy="151" rx="12" ry="8" fill="#333"/><path d="M15,155 l-2,8 l8,-5z" fill="#333"/>
 <!-- notes -->
 <path d="M15,186 h15 v4 M30,199 v7 h-16 v-20" fill="none" stroke="#333" stroke-width="2"/><path d="M17,191 h8 M17,195 h6 M17,199 h5" stroke="#333" stroke-width="1.8"/><path d="M24,201 l10,-11 l2,2 l-10,11 l-3,1z" fill="#333"/>
 <!-- stopwatch -->
 <circle cx="25" cy="238.5" r="8.3" fill="none" stroke="#333" stroke-width="2.2"/><path d="M22,228 h6 M25,228 v2" stroke="#333" stroke-width="2"/><path d="M25,239 l4,-4" stroke="#333" stroke-width="2"/><path d="M12,236 h6 M13,240 h5 M14,244 h5" stroke="#333" stroke-width="1.4"/>
 <!-- logo circle -->
 <circle cx="23.5" cy="279" r="11" fill="#333"/><path d="M32,284 l3,6 l-7,-3z" fill="#333"/><polygon points="23.5,272 29.5,275.5 29.5,282.5 23.5,286 17.5,282.5 17.5,275.5" fill="none" stroke="#f7f7f7" stroke-width="1.6"/><polygon points="23.5,275.5 26.5,277.3 26.5,280.8 23.5,282.5 20.5,280.8 20.5,277.3" fill="none" stroke="#f7f7f7" stroke-width="1.2"/>
 <!-- checklist -->
 <rect x="14.5" y="320" width="18" height="20" rx="1.5" fill="none" stroke="#333" stroke-width="2"/><path d="M17,325 l1.5,1.5 l2.5,-3 M17,330 l1.5,1.5 l2.5,-3 M17,335 l1.5,1.5 l2.5,-3" fill="none" stroke="#333" stroke-width="1.3"/><path d="M23,325 h7 M23,330 h7 M23,335 h7" stroke="#333" stroke-width="2"/>
</svg>
<div class="a" style="left:48px;top:91px;width:247px;height:1072px;background:#fff;border-top:1px solid #d6d6d6;border-right:1px solid #d0d0d0"></div>
<svg class="a" style="left:60px;top:110px" width="21" height="20" viewBox="0 0 21 20"><path d="M1,1.5 h19 l-7,8 v9 l-5,-3 v-6z" fill="none" stroke="#333" stroke-width="1.7" stroke-linejoin="round"/></svg>
<div class="a" style="left:95px;top:101px;width:189px;height:35px;border:1px solid #c8c8c8;border-radius:4px;background:#fff"></div>
<div class="t" style="left:103px;top:111.5px;font-size:15.5px;font-style:italic;color:#999">Filter by name or type</div>
<div class="t" style="left:53px;top:148.2px;font-size:15.3px;font-weight:bold;color:#333">Features (24)</div>
<svg class="a" style="left:174px;top:147px" width="24" height="18" viewBox="0 0 24 18"><path d="M1.5,3 v-2 h7 l2,2.5 h12 v13 h-18" fill="none" stroke="#a9a9a9" stroke-width="1.3"/><path d="M1.5,6 v10.5 h3" fill="none" stroke="#a9a9a9" stroke-width="1.2" stroke-dasharray="1.5,1.5"/><path d="M6,6 v10 M1,11 h10" stroke="#6f8fd0" stroke-width="2"/></svg>
<div class="a" style="left:215px;top:148px;width:4px;height:16px;background:#a8a8a8"></div><div class="a" style="left:225px;top:148px;width:4px;height:16px;background:#a8a8a8"></div>
<svg class="a" style="left:247px;top:144px" width="22" height="24" viewBox="0 0 22 24"><circle cx="10.5" cy="13.5" r="8.5" fill="none" stroke="#333" stroke-width="2.2"/><path d="M7,2 h7 M10.5,2 v3 M17,5 l2,2" stroke="#333" stroke-width="2"/><path d="M10.5,13.5 l3,3" stroke="#333" stroke-width="1.8"/></svg>
<div class="a" style="left:59px;top:204px;width:1px;height:124px;background:#cfcfcf"></div><div class="a" style="left:54px;top:328px;width:12px;height:1px;background:#cfcfcf"></div>
<div class="a" style="left:59px;top:392px;width:1px;height:155px;background:#cfcfcf"></div><div class="a" style="left:54px;top:546px;width:12px;height:1px;background:#cfcfcf"></div>
<div class="a" style="left:59px;top:609px;width:1px;height:172px;background:#cfcfcf"></div>
<div class="a" style="left:48px;top:579px;width:240px;height:28px;background:#eceef1"></div><div class="a" style="left:48px;top:607px;width:240px;height:1px;background:#a9cbe6"></div>
<div class="a" style="left:48px;top:611px;width:240px;height:28px;background:#b3dcf6"></div>
<svg class="a" style="left:53px;top:183.5px" width="15" height="10" viewBox="0 0 15 10"><path d="M1.5,1.5 L7.5,7.5 L13.5,1.5" fill="none" stroke="#555" stroke-width="2.6"/></svg>
<div class="t" style="left:76px;top:180.9px;font-size:15.5px;color:#333;">Default geometry</div>
<svg class="a" style="left:82px;top:214.0px" width="10" height="10" viewBox="0 0 10 10"><circle cx="5" cy="5" r="4" fill="none" stroke="#555" stroke-width="1"/><circle cx="5" cy="5" r="1.8" fill="#555"/></svg>
<div class="t" style="left:102px;top:211.9px;font-size:15.5px;color:#333;">Origin</div>
<svg class="a" style="left:78px;top:241.1px" width="19" height="19" viewBox="0 0 19 19"><path d="M1.5,1.5 l4,1 h12 v15 h-12 l-4,-1z M5.5,2.5 v15 M9,6 h5 v5 h-5" fill="#f0f0f0" stroke="#bbb" stroke-width="1.4"/></svg>
<div class="t" style="left:102px;top:243.1px;font-size:15.5px;color:#a6a6a6;">Top</div>
<svg class="a" style="left:78px;top:272.3px" width="19" height="19" viewBox="0 0 19 19"><path d="M1.5,1.5 l4,1 h12 v15 h-12 l-4,-1z M5.5,2.5 v15 M9,6 h5 v5 h-5" fill="#f0f0f0" stroke="#bbb" stroke-width="1.4"/></svg>
<div class="t" style="left:102px;top:274.3px;font-size:15.5px;color:#a6a6a6;">Front</div>
<svg class="a" style="left:78px;top:303.5px" width="19" height="19" viewBox="0 0 19 19"><path d="M1.5,1.5 l4,1 h12 v15 h-12 l-4,-1z M5.5,2.5 v15 M9,6 h5 v5 h-5" fill="#f0f0f0" stroke="#bbb" stroke-width="1.4"/></svg>
<div class="t" style="left:102px;top:305.5px;font-size:15.5px;color:#a6a6a6;">Right</div>
<svg class="a" style="left:55px;top:334.5px" width="18" height="19" viewBox="0 0 18 19"><path d="M9,1 l8,4 v9 l-8,4 l-8,-4 v-9z" fill="#e0e0e0" stroke="#666" stroke-width="1.2"/><path d="M1,5 l8,4 l8,-4 M9,9 v9" fill="none" stroke="#666" stroke-width="1.2"/><path d="M9,9 l8,-4 v9 l-8,4z" fill="#c8c8c8"/></svg>
<div class="t" style="left:79px;top:336.7px;font-size:15.5px;color:#333;">Origin Cube</div>
<svg class="a" style="left:235px;top:333.0px" width="10" height="22" viewBox="0 0 10 22"><path d="M5,0 v22" stroke="#333" stroke-width="2" stroke-dasharray="2.5,2"/><circle cx="5" cy="11" r="3.3" fill="#333"/></svg>
<svg class="a" style="left:53px;top:370.9px" width="15" height="10" viewBox="0 0 15 10"><path d="M1.5,1.5 L7.5,7.5 L13.5,1.5" fill="none" stroke="#555" stroke-width="2.6"/></svg>
<svg class="a" style="left:78px;top:367.4px" width="20" height="16" viewBox="0 0 20 16"><path d="M1,1 h6 l2,2.5 h10 v11.5 h-18z" fill="none" stroke="#555" stroke-width="1.3"/></svg>
<div class="t" style="left:103px;top:367.9px;font-size:15.5px;color:#333;">Frame (5)</div>
<svg class="a" style="left:78px;top:397.5px" width="19" height="19" viewBox="0 0 19 19"><path d="M3,15 l1,-4 l9,-9 l3,3 l-9,9z M11,4 l3,3" fill="none" stroke="#999" stroke-width="1.3"/><path d="M1,17.5 h17" stroke="#7b8fc8" stroke-width="1.2"/></svg>
<div class="t" style="left:102px;top:399.5px;font-size:15.5px;color:#a6a6a6;">Tube Sketch</div>
<svg class="a" style="left:78px;top:428.5px" width="19" height="19" viewBox="0 0 19 19"><path d="M1,3 l2.5,-2 h11.5 l2,2 v13.5 l-2,2 h-11.5 l-1.5,-1.5z" fill="#d8d8d8" stroke="#666" stroke-width="1"/><rect x="4" y="3.5" width="13" height="14.5" fill="#9c9c9c"/><rect x="10.5" y="3.5" width="6.5" height="7" fill="#b3b3b3"/><rect x="4" y="10.5" width="6.5" height="7.5" fill="#8a8a8a"/><path d="M4,3.5 v14.5 h13" fill="none" stroke="#666" stroke-width="0.9"/></svg>
<div class="t" style="left:102px;top:430.5px;font-size:15.5px;color:#333;">Tubes</div>
<svg class="a" style="left:235px;top:426.0px" width="10" height="22" viewBox="0 0 10 22"><path d="M5,0 v22" stroke="#333" stroke-width="2" stroke-dasharray="2.5,2"/><circle cx="5" cy="11" r="3.3" fill="#333"/></svg>
<svg class="a" style="left:78px;top:459.0px" width="20" height="20" viewBox="0 0 20 20"><path d="M1,3.5 l3.5,-2.5 h9 l5,3 v13 l-3.5,2.5 h-10l-4,-3z" fill="#fff" stroke="#333" stroke-width="1.3" stroke-linejoin="round"/><path d="M1,3.5 h12.5 l5,0.5 M13.5,3.5 v16" fill="none" stroke="#333" stroke-width="1.1"/><path d="M14.5,5 l3,0.5 v11 l-3,2z" fill="#8f8f8f"/><path d="M15.5,8 l1.2,0.3 v6 l-1.2,1z" fill="#d0d0d0"/><g fill="#555"><circle cx="5" cy="8" r="1.5"/><circle cx="10" cy="8" r="1.5"/><circle cx="5" cy="13.5" r="1.5"/><circle cx="10" cy="13.5" r="1.5"/></g></svg>
<div class="t" style="left:102px;top:461.5px;font-size:15.5px;color:#333;">Tube Converter</div>
<svg class="a" style="left:235px;top:457.0px" width="10" height="22" viewBox="0 0 10 22"><path d="M5,0 v22" stroke="#333" stroke-width="2" stroke-dasharray="2.5,2"/><circle cx="5" cy="11" r="3.3" fill="#333"/></svg>
<svg class="a" style="left:78px;top:490.5px" width="19" height="19" viewBox="0 0 19 19"><path d="M3,15 l1,-4 l9,-9 l3,3 l-9,9z M11,4 l3,3" fill="none" stroke="#999" stroke-width="1.3"/><path d="M1,17.5 h17" stroke="#7b8fc8" stroke-width="1.2"/></svg>
<div class="t" style="left:102px;top:492.5px;font-size:15.5px;color:#a6a6a6;">Gusset</div>
<svg class="a" style="left:78px;top:521.5px" width="19" height="19" viewBox="0 0 19 19"><path d="M1,3.5 l2.5,-2.5 h11 l2.5,2.5 v13 l-2.5,2.5 h-11 l-2.5,-2.5z" fill="#fff" stroke="#555" stroke-width="1.1"/><path d="M3.5,3.5 h13.5 M3.5,3.5 v15" fill="none" stroke="#555" stroke-width="0.9"/><rect x="7" y="7" width="10" height="10.5" fill="#8c8c8c" stroke="#555" stroke-width="1"/><path d="M7,7 l2,-1.5 h9 v10" fill="none" stroke="#555" stroke-width="0.8"/></svg>
<div class="t" style="left:102px;top:523.5px;font-size:15.5px;color:#333;">Gusset</div>
<svg class="a" style="left:55px;top:553.5px" width="19" height="19" viewBox="0 0 19 19"><path d="M3,15 l1,-4 l9,-9 l3,3 l-9,9z M11,4 l3,3" fill="none" stroke="#999" stroke-width="1.3"/><path d="M1,17.5 h17" stroke="#7b8fc8" stroke-width="1.2"/></svg>
<div class="t" style="left:79px;top:555.5px;font-size:15.5px;color:#333;">Gearbox Layout</div>
<svg class="a" style="left:53px;top:589.5px" width="15" height="10" viewBox="0 0 15 10"><path d="M1.5,1.5 L7.5,7.5 L13.5,1.5" fill="none" stroke="#555" stroke-width="2.6"/></svg>
<svg class="a" style="left:78px;top:586.0px" width="20" height="16" viewBox="0 0 20 16"><path d="M1,1 h6 l2,2.5 h10 v11.5 h-18z" fill="none" stroke="#555" stroke-width="1.3"/></svg>
<div class="t" style="left:103px;top:586.5px;font-size:15.5px;color:#333;">GB Plates (6)</div>
<svg class="a" style="left:78px;top:615.5px" width="19" height="19" viewBox="0 0 19 19"><path d="M3,15 l1,-4 l9,-9 l3,3 l-9,9z M11,4 l3,3" fill="none" stroke="#6a7f95" stroke-width="1.3"/><path d="M1,17.5 h17" stroke="#7b8fc8" stroke-width="1.2"/></svg>
<div class="t" style="left:102px;top:617.5px;font-size:15.5px;color:#4d6a82;font-weight:bold">Plate Sketch</div>
<svg class="a" style="left:78px;top:646.5px" width="19" height="19" viewBox="0 0 19 19"><path d="M1,3.5 l2.5,-2.5 h11 l2.5,2.5 v13 l-2.5,2.5 h-11 l-2.5,-2.5z" fill="#fff" stroke="#aaa" stroke-width="1.1"/><path d="M3.5,3.5 h13.5 M3.5,3.5 v15" fill="none" stroke="#aaa" stroke-width="0.9"/><rect x="7" y="7" width="10" height="10.5" fill="#bbb" stroke="#aaa" stroke-width="1"/><path d="M7,7 l2,-1.5 h9 v10" fill="none" stroke="#aaa" stroke-width="0.8"/></svg>
<div class="t" style="left:102px;top:648.5px;font-size:15.5px;color:#a6a6a6;font-style:italic">Plate Extrude</div>
<svg class="a" style="left:78px;top:677.5px" width="19" height="19" viewBox="0 0 19 19"><path d="M3,15 l1,-4 l9,-9 l3,3 l-9,9z M11,4 l3,3" fill="none" stroke="#999" stroke-width="1.3"/><path d="M1,17.5 h17" stroke="#7b8fc8" stroke-width="1.2"/></svg>
<div class="t" style="left:102px;top:679.5px;font-size:15.5px;color:#a6a6a6;font-style:italic">Inner plate</div>
<svg class="a" style="left:78px;top:709.5px" width="19" height="19" viewBox="0 0 19 19"><path d="M1,3.5 l2.5,-2.5 h11 l2.5,2.5 v13 l-2.5,2.5 h-11 l-2.5,-2.5z" fill="#fff" stroke="#aaa" stroke-width="1.1"/><path d="M3.5,3.5 h13.5 M3.5,3.5 v15" fill="none" stroke="#aaa" stroke-width="0.9"/><rect x="7" y="7" width="10" height="10.5" fill="#bbb" stroke="#aaa" stroke-width="1"/><path d="M7,7 l2,-1.5 h9 v10" fill="none" stroke="#aaa" stroke-width="0.8"/></svg>
<div class="t" style="left:102px;top:711.5px;font-size:15.5px;color:#a6a6a6;font-style:italic">Inner Plate</div>
<svg class="a" style="left:78px;top:740.5px" width="19" height="19" viewBox="0 0 19 19"><path d="M1.5,7 c0,-4 3,-6 6,-6 h8 l2,2 v14 l-2,1 h-12 l-2,-2z" fill="#fff" stroke="#aaa" stroke-width="1.2"/><path d="M1.5,7 c0,-4 3,-6 6,-6 h2 c-4,1 -6,3 -6,6z" fill="#999"/></svg>
<div class="t" style="left:102px;top:742.5px;font-size:15.5px;color:#a6a6a6;font-style:italic">Fillet Plate</div>
<div class="a" style="left:48px;top:770px;width:240px;height:11px;overflow:hidden"><div class="t" style="left:54px;top:3px;font-size:15.5px;font-style:italic;color:#a6a6a6">Gearbox Spacer</div><svg class="a" style="left:30px;top:1px" width="19" height="12" viewBox="0 0 19 12"><path d="M2,4 h15 M4,1 v6 M9,1 v6 M14,1 v6 M2,10 h15" stroke="#999" stroke-width="1.4"/></svg><svg class="a" style="left:187px;top:0" width="10" height="12" viewBox="0 0 10 12"><path d="M5,0 v6" stroke="#333" stroke-width="2" stroke-dasharray="2,2"/><circle cx="5" cy="9" r="3.3" fill="#333"/></svg></div>
<div class="a" style="left:48px;top:781px;width:240px;height:1px;background:#d8d8d8"></div>
<svg class="a" style="left:53px;top:793.5px" width="15" height="10" viewBox="0 0 15 10"><path d="M1.5,1.5 L7.5,7.5 L13.5,1.5" fill="none" stroke="#555" stroke-width="2.6"/></svg>
<div class="t" style="left:76px;top:790.9px;font-size:15.5px;color:#333;">Parts (4)</div>
<svg class="a" style="left:78px;top:819.9px" width="19" height="19" viewBox="0 0 19 19"><path d="M1.5,11 h5 v-6.5 h7 v13 h-12z" fill="#fff" stroke="#555" stroke-width="1.2" stroke-linejoin="round"/><path d="M6.5,4.5 l3.5,-3 h7 v13 l-3.5,3 M13.5,4.5 l3.5,-3 M1.5,11 l3.5,-3 h1.5" fill="none" stroke="#555" stroke-width="1.2" stroke-linejoin="round"/></svg>
<div class="t" style="left:102px;top:821.9px;font-size:15.5px;color:#333;">Tube 1&quot;x1&quot;x7&quot;</div>
<svg class="a" style="left:78px;top:851.1px" width="19" height="19" viewBox="0 0 19 19"><path d="M1.5,11 h5 v-6.5 h7 v13 h-12z" fill="#fff" stroke="#555" stroke-width="1.2" stroke-linejoin="round"/><path d="M6.5,4.5 l3.5,-3 h7 v13 l-3.5,3 M13.5,4.5 l3.5,-3 M1.5,11 l3.5,-3 h1.5" fill="none" stroke="#555" stroke-width="1.2" stroke-linejoin="round"/></svg>
<div class="t" style="left:102px;top:853.1px;font-size:15.5px;color:#333;">Tube 1&quot;x1&quot;x7&quot;</div>
<svg class="a" style="left:78px;top:882.3px" width="19" height="19" viewBox="0 0 19 19"><path d="M1.5,11 h5 v-6.5 h7 v13 h-12z" fill="#fff" stroke="#555" stroke-width="1.2" stroke-linejoin="round"/><path d="M6.5,4.5 l3.5,-3 h7 v13 l-3.5,3 M13.5,4.5 l3.5,-3 M1.5,11 l3.5,-3 h1.5" fill="none" stroke="#555" stroke-width="1.2" stroke-linejoin="round"/></svg>
<div class="t" style="left:102px;top:884.3px;font-size:15.5px;color:#333;">Tube 1&quot;x1&quot;x8&quot;</div>
<svg class="a" style="left:78px;top:913.5px" width="19" height="19" viewBox="0 0 19 19"><path d="M1.5,11 h5 v-6.5 h7 v13 h-12z" fill="#fff" stroke="#555" stroke-width="1.2" stroke-linejoin="round"/><path d="M6.5,4.5 l3.5,-3 h7 v13 l-3.5,3 M13.5,4.5 l3.5,-3 M1.5,11 l3.5,-3 h1.5" fill="none" stroke="#555" stroke-width="1.2" stroke-linejoin="round"/></svg>
<div class="t" style="left:102px;top:915.5px;font-size:15.5px;color:#333;">Frame Gusset</div>
<div class="a" style="left:294px;top:599px;width:40px;height:39px;background:#fff;border:1px solid #cfcfcf;border-left:none;border-radius:0 3px 3px 0"></div>
<svg class="a" style="left:303px;top:607px" width="22" height="22" viewBox="0 0 22 22"><path d="M2,2 h18 M8,7 h12 M8,12 h12 M8,17 h12 M2,20 h18" stroke="#555" stroke-width="1.6"/><path d="M2,6 l4,3 l-4,3" fill="none" stroke="#555" stroke-width="1.4"/></svg><div class="a" style="left:288px;top:100px;width:264px;height:258px;background:#fff;box-shadow:0 2px 12px rgba(0,0,0,0.24)"></div>
<div class="t" style="left:296px;top:105.6px;font-size:14.8px;font-weight:bold;color:#333">Plate Sketch</div>
<div class="a" style="left:288px;top:128px;width:264px;height:1px;background:#dcdcdc"></div>
<div class="a" style="left:485px;top:95px;width:33px;height:33px;background:#0a980a"></div>
<svg class="a" style="left:485px;top:95px" width="33" height="33" viewBox="0 0 33 33"><path d="M8,17 l6,6 l11,-12" fill="none" stroke="#fff" stroke-width="4"/></svg>
<svg class="a" style="left:526px;top:105px" width="17" height="16" viewBox="0 0 17 16"><path d="M2,1.5 L15,14.5 M15,1.5 L2,14.5" stroke="#c62a3a" stroke-width="3.2"/></svg>
<div class="a" style="left:293px;top:135px;width:224px;height:53px;border:1px solid #dadada;border-radius:3px"></div>
<div class="t" style="left:300px;top:144.6px;font-size:11.9px;color:#666">Sketch plane</div>
<div class="t" style="left:300px;top:167px;font-size:15.3px;color:#555">Face of Tubes</div>
<svg class="a" style="left:492px;top:170px" width="12" height="12" viewBox="0 0 12 12"><path d="M2,2 L10,10 M10,2 L2,10" stroke="#555" stroke-width="1.4"/></svg>
<svg class="a" style="left:521px;top:139px" width="24" height="24" viewBox="0 0 24 24"><circle cx="12" cy="12" r="10.3" fill="none" stroke="#444" stroke-width="1.4"/><circle cx="12" cy="12" r="8" fill="none" stroke="#444" stroke-width="1.4"/><path d="M12,4.5 v7.5 h7.5 a7.5,7.5 0 0 0 -7.5,-7.5z" fill="#e6e6e6"/><path d="M12,5 v7 h7" fill="none" stroke="#444" stroke-width="1.6"/></svg>
<svg class="a" style="left:293px;top:204px" width="14" height="120" viewBox="0 0 14 120">
 <rect x="0.5" y="0.5" width="13" height="13" rx="2" fill="#1f5fbf"/><path d="M3.5,7 l2.5,2.5 l4.5,-5" fill="none" stroke="#fff" stroke-width="1.8"/>
 <rect x="1" y="34" width="12" height="12" rx="2" fill="#fff" stroke="#777" stroke-width="1"/>
 <rect x="0.5" y="66.5" width="13" height="13" rx="2" fill="#1f5fbf"/><path d="M3.5,73 l2.5,2.5 l4.5,-5" fill="none" stroke="#fff" stroke-width="1.8"/>
 <rect x="0.5" y="99.5" width="13" height="13" rx="2" fill="#1f5fbf"/><path d="M3.5,106 l2.5,2.5 l4.5,-5" fill="none" stroke="#fff" stroke-width="1.8"/>
</svg>
<div class="t" style="left:312px;top:203.5px;font-size:15.8px;color:#555">Disable imprinting</div>
<div class="t" style="left:312px;top:236.5px;font-size:15.8px;color:#555">Show constraints</div>
<div class="t" style="left:312px;top:269.5px;font-size:15.8px;color:#555">Show expressions</div>
<div class="t" style="left:312px;top:302.5px;font-size:15.8px;color:#555">Show errors</div>
<div class="a" style="left:431px;top:329px;width:26px;height:27px;border:1px solid #c8c8c8;border-radius:4px"></div>
<svg class="a" style="left:432px;top:330px" width="24" height="25" viewBox="0 0 24 25"><circle cx="11.5" cy="12" r="9" fill="none" stroke="#333" stroke-width="1.5"/><path d="M18,19 l3,3" stroke="#333" stroke-width="2"/><path d="M8,16 l1,-4 l6,-6 l2.5,2.5 l-6,6z" fill="none" stroke="#333" stroke-width="1.3"/><path d="M5,17.5 h12" stroke="#3c5fb0" stroke-width="1.2"/></svg>
<div class="a tx" style="left:462px;top:329px;width:59px;height:27px;border:1px solid #c8c8c8;border-radius:4px;font-size:14.3px;color:#333;line-height:25px;text-align:center">Final</div>
<svg class="a" style="left:530px;top:338px" width="16" height="16" viewBox="0 0 16 16"><circle cx="8" cy="8" r="7.6" fill="#a8a8a8"/><path d="M5.5,6 c0,-1.5 1,-2.5 2.5,-2.5 s2.5,1 2.5,2.5 c0,2 -2.5,2 -2.5,3.8" fill="none" stroke="#fff" stroke-width="1.8"/><circle cx="8" cy="12" r="1.1" fill="#fff"/></svg>
<svg class="a" style="left:1715px;top:100px" width="205" height="200" viewBox="1715 100 205 200">
 <g fill="#e5e7e9">
  <polygon points="1812,109 1803.5,120.7 1820.7,120.7"/>
  <polygon points="1812,287.4 1803.5,276.8 1820.7,276.8"/>
  <polygon points="1722,199.2 1734.5,190.6 1734.5,207.9"/>
  <polygon points="1902.2,199.2 1889.7,190.6 1889.7,207.9"/>
 </g>
 <path d="M1789,122 C1772,126 1760,134 1753,143" fill="none" stroke="#e5e7e9" stroke-width="5.5"/>
 <polygon points="1747,149 1748,136 1759,142" fill="#e5e7e9"/>
 <path d="M1836,122 C1853,126 1865,134 1872,143" fill="none" stroke="#e5e7e9" stroke-width="5.5"/>
 <polygon points="1878,149 1877,136 1866,142" fill="#e5e7e9"/>
 <polygon points="1792,163.8 1832,163.8 1846.6,178 1846.6,218.6 1832,232.8 1792,232.8 1777.6,218.6 1777.6,178" fill="#e3e5e7"/>
 <rect x="1785.3" y="172.4" width="53.7" height="54.6" rx="9" fill="#fbfcfd"/>
 <text x="1795.5" y="202.5" font-size="14.2" fill="#333" font-family="Liberation Sans">Right</text>
 <path d="M1775.1,164.7 V235.6 H1845.6" fill="none" stroke="#3b3bc9" stroke-width="1.6"/>
 <path d="M1775.1,235.6 H1845.6" fill="none" stroke="#35a83a" stroke-width="1.6"/>
 <text x="1770.5" y="158.3" font-size="12.5" font-weight="bold" fill="#3b3bc9" font-family="Liberation Sans">Z</text>
 <text x="1853.5" y="240.6" font-size="12.5" font-weight="bold" fill="#35a83a" font-family="Liberation Sans">Y</text>
 <path d="M1867,267 l10.5,5 v11 l-10.5,5 l-10.5,-5 v-11z" fill="#e8e8e8" stroke="#333" stroke-width="1.3"/>
 <path d="M1856.5,272 l10.5,5 l10.5,-5 M1867,277 v11" fill="none" stroke="#333" stroke-width="1.2"/>
 <path d="M1867,277 l10.5,-5 v11 l-10.5,5z" fill="#c4c4c4"/>
 <polygon points="1887.8,275.5 1895.5,275.5 1891.6,279.7" fill="#333"/>
</svg>
<div class="a" style="left:1882px;top:412px;width:40px;height:159px;border:1px solid #c8c8c8;border-right:none;background:#fff"></div>
<div class="a" style="left:1882px;top:452px;width:38px;height:1px;background:#c8c8c8"></div>
<div class="a" style="left:1882px;top:491px;width:38px;height:1px;background:#c8c8c8"></div>
<div class="a" style="left:1882px;top:531px;width:38px;height:1px;background:#c8c8c8"></div>
<div class="a" style="left:1882px;top:585px;width:40px;height:237px;border:1px solid #c8c8c8;border-right:none;background:#fff"></div>
<div class="a" style="left:1882px;top:623px;width:38px;height:1px;background:#c8c8c8"></div>
<div class="a" style="left:1882px;top:663px;width:38px;height:1px;background:#c8c8c8"></div>
<div class="a" style="left:1882px;top:703px;width:38px;height:1px;background:#c8c8c8"></div>
<div class="a" style="left:1882px;top:743px;width:38px;height:1px;background:#c8c8c8"></div>
<div class="a" style="left:1882px;top:782px;width:38px;height:1px;background:#c8c8c8"></div>
<svg class="a" style="left:1883px;top:413px" width="37" height="408" viewBox="1883 413 37 408">
 <!-- appearance -->
 <path d="M1891,440 l8,-15 l5,2.5 l-5,12.5z" fill="#6e6e6e"/><path d="M1897,440 l8,-12 l4,3 l-6,9z" fill="#9a9a9a"/>
 <rect x="1889.8" y="438.5" width="23" height="7.5" rx="1.5" fill="#fff" stroke="#555" stroke-width="1.1"/><rect x="1906.5" y="439" width="6" height="6.5" fill="#bbb"/><circle cx="1893.5" cy="442.2" r="1.1" fill="none" stroke="#555" stroke-width="0.8"/><path d="M1897.5,438.5 v7.5 M1906,438.5 v7.5" stroke="#555" stroke-width="1"/>
 <!-- grid cube -->
 <path d="M1903,466 l8.5,4.2 v9.5 l-8.5,4.3 l-8.5,-4.3 v-9.5z M1894.5,470.2 l8.5,4.3 l8.5,-4.3 M1903,474.5 v9.5" fill="#fff" stroke="#333" stroke-width="1.3" stroke-linejoin="round"/>
 <rect x="1889" y="462" width="12" height="10" fill="#2f6fd0"/><path d="M1893,462 v10 M1897,462 v10 M1889,467 h12" stroke="#cfe0f7" stroke-width="0.9"/>
 <!-- grid cube braces -->
 <path d="M1902.5,506 l7,3.5 v8 l-7,3.5 l-7,-3.5 v-8z M1895.5,509.5 l7,3.5 l7,-3.5 M1902.5,513 v8" fill="#fff" stroke="#333" stroke-width="1.2" stroke-linejoin="round"/>
 <rect x="1889" y="502" width="12" height="10" fill="#4a4a4a"/><path d="M1893,502 v10 M1897,502 v10 M1889,507 h12" stroke="#ddd" stroke-width="0.9"/>
 <path d="M1893,512 c-2,0 -2,1.5 -2,3 v2.5 l-1.2,1 l1.2,1 v2.5 c0,1.5 0,3 2,3 M1911,503 c2,0 2,1.5 2,3 v5 l1.2,1 l-1.2,1 v5 c0,1.5 0,3 -2,3" fill="none" stroke="#444" stroke-width="1.2"/>
 <!-- grid fx -->
 <rect x="1889" y="541" width="12" height="10" fill="#4a4a4a"/><path d="M1893,541 v10 M1897,541 v10 M1889,546 h12" stroke="#ddd" stroke-width="0.9"/>
 <path d="M1890.5,545 c-2.5,3 -2.5,12 0,16" fill="none" stroke="#222" stroke-width="1.8"/><path d="M1911,545 c2.5,3 2.5,12 0,16" fill="none" stroke="#222" stroke-width="1.8"/>
 <path d="M1896,552 c3,-2 5,-1 6,3 l1.5,4 c1,2 3,2 5,0 M1908,551 c-3,1 -6,5 -9,9 c-1,1 -3,1 -3.5,0" fill="none" stroke="#222" stroke-width="1.8"/>
 <!-- MK -->
 <rect x="1887" y="590" width="29" height="29" rx="4" fill="#e2e2e2"/><rect x="1888.5" y="593" width="25.5" height="24" fill="#1f56c8" stroke="#111" stroke-width="1"/>
 <text x="1889.5" y="612.5" font-size="15" font-weight="bold" fill="#fff" font-family="Liberation Serif" textLength="23" lengthAdjust="spacingAndGlyphs">MK</text>
 <!-- robot -->
 <rect x="1887" y="629" width="29" height="29" rx="4" fill="#e2e2e2"/>
 <path d="M1890,641 l21,-4 l2.5,12 l-21,4z" fill="#333"/><circle cx="1897" cy="645" r="3" fill="#5aaef0" stroke="#fff" stroke-width="0.8"/><circle cx="1905.5" cy="643.5" r="3" fill="#5aaef0" stroke="#fff" stroke-width="0.8"/><path d="M1900,650 c2,1 4,0 5,-2" fill="none" stroke="#fff" stroke-width="1"/>
 <path d="M1895,633 v6 M1901,632 v6 M1906,632 v5" stroke="#3a6fd0" stroke-width="1"/><circle cx="1895" cy="633" r="1.2" fill="#3a6fd0"/><circle cx="1906" cy="632" r="1.2" fill="#3a6fd0"/>
 <!-- braces cube -->
 <rect x="1887" y="669" width="29" height="29" rx="4" fill="#e8e8e8"/><rect x="1889" y="671" width="25" height="25" rx="2" fill="#fff"/>
 <path d="M1905,677 l5.5,2.8 v6.4 l-5.5,2.8 l-5.5,-2.8 v-6.4z M1899.5,679.8 l5.5,2.8 l5.5,-2.8 M1905,682.6 v6.4" fill="#fff" stroke="#222" stroke-width="1.1" stroke-linejoin="round"/>
 <path d="M1898,675 c-2,0 -2,1.5 -2,3 v3 l-1.5,2 l1.5,2 v3 c0,1.5 0,3 2,3" fill="none" stroke="#222" stroke-width="1.2"/><path d="M1894,683 h-5 M1891.5,680.5 l-2.5,2.5 l2.5,2.5" fill="none" stroke="#222" stroke-width="1.3"/>
 <!-- A logo -->
 <rect x="1887" y="709" width="29" height="29" rx="4" fill="#dcdcdc"/><path d="M1890,735 L1902,712.5 L1913.5,735 L1907,735 C1905,729 1901,727 1897,728.5 L1893.5,735z" fill="#2ea3de"/>
 <!-- green book -->
 <rect x="1887" y="749" width="29" height="29" rx="4" fill="#e2e2e2"/><rect x="1889.5" y="751.5" width="24" height="24" fill="#4caf50"/>
 <path d="M1892,756 c3,-1 6,-1 9,0.5 v14 c-3,-1.5 -6,-1.5 -9,-0.5z M1902,756.5 c3,-1.5 6,-1.5 9,-0.5 v14 c-3,-1 -6,-1 -9,0.5z" fill="#fff"/>
 <!-- blue book -->
 <rect x="1887" y="788" width="29" height="29" rx="4" fill="#e2e2e2"/><rect x="1889.5" y="790.5" width="24" height="24" fill="#1f56c8" stroke="#111" stroke-width="1"/>
 <path d="M1892,795 c3,-1 6,-1 9,0.5 v14 c-3,-1.5 -6,-1.5 -9,-0.5z M1902,795.5 c3,-1.5 6,-1.5 9,-0.5 v14 c-3,-1 -6,-1 -9,0.5z" fill="#fff"/>
</svg>
<div class="a" style="left:47px;top:1164px;width:1873px;height:36px;background:#d6d6d6"></div>
<div class="a" style="left:0;top:1164px;width:47px;height:36px;background:#f7f7f7"></div>
<svg class="a" style="left:12px;top:1174px" width="25" height="20" viewBox="0 0 25 20"><path d="M1,1 h21 v6 h-8 a5,5 0 0 0 -6,4 h-7z" fill="#333"/><circle cx="13.5" cy="12" r="4.3" fill="none" stroke="#333" stroke-width="2.2"/><path d="M16.5,15 l4,4" stroke="#333" stroke-width="2.4"/></svg>
<svg class="a" style="left:57px;top:1172px" width="20" height="20" viewBox="0 0 20 20"><path d="M10,1 v18 M1,10 h18" stroke="#555" stroke-width="3.2"/></svg>
<div class="a" style="left:88px;top:1164px;width:41px;height:32px;background:#e9e9e9;border:1px solid #d0d0d0"></div>
<svg class="a" style="left:98px;top:1167px" width="24" height="22" viewBox="0 0 24 22"><path d="M11,1 L1,10.5 h3 v11 h5.5 v-6 h3.5 v6 h5.5 v-11 h3 L18,7.5 v-6 h-2.5 v3.5z" fill="#666"/></svg>
<svg class="a" style="left:130px;top:1164px" width="152" height="32" viewBox="0 0 152 32"><path d="M0.5,0.5 h140 l10,15.5 l-10,15.5 h-140 l8,-15.5z" fill="#f7f7f7" stroke="#dcdcdc" stroke-width="1"/></svg>
<svg class="a" style="left:150px;top:1169px" width="24" height="18" viewBox="0 0 24 18"><path d="M1,1 h7 l2,2.5 h12.5 v13 h-21.5z" fill="none" stroke="#555" stroke-width="1.5"/></svg>
<div class="t" style="left:180px;top:1171.3px;font-size:16.2px;color:#555">Exercise 3</div>
<div class="a" style="left:283px;top:1164px;width:240px;height:32px;background:#e7e7e7;border-radius:0 0 5px 5px;box-shadow:0 1px 1px rgba(0,0,0,0.08)"></div>
<svg class="a" style="left:295px;top:1169px" width="24" height="23" viewBox="0 0 24 23"><path d="M1.5,4 l3,-3 h15 l2.5,3 v17 h-17 l-3.5,-3.5z M1.5,4 h17 l3,-3 M18.5,4 v17" fill="#fff" stroke="#444" stroke-width="1.3"/><rect x="5" y="6" width="13" height="11" fill="#8a8a8a"/><path d="M1.5,17.5 h3.5 v3.5" fill="none" stroke="#444" stroke-width="1.2"/></svg>
<div class="t" style="left:323px;top:1173.3px;font-size:16.5px;color:#777">Exercise 3 Assembly</div>
<div class="a" style="left:525px;top:1164px;width:240px;height:33px;background:#fff;border-radius:0 0 5px 5px;border-bottom:3px solid #1f5fbf"></div>
<svg class="a" style="left:538px;top:1168px" width="24" height="24" viewBox="0 0 24 24"><path d="M1.5,9 l2,-2 h5 l1.5,2 v13 h-7 l-1.5,-1.5z M1.5,9 h7 l1.5,-2 M8.5,9 v13" fill="#fff" stroke="#444" stroke-width="1.3"/><path d="M10,3 l2,-2 h8 l2,2 v19 h-10 l-2,-1.5z M10,3 h10 l2,-2 M20,3 v19" fill="#fff" stroke="#444" stroke-width="1.3"/></svg>
<div class="t" style="left:565px;top:1173.3px;font-size:16.3px;color:#333">Exercise 3 Part Studio</div>
<!-- measure icons -->
<svg class="a" style="left:1800px;top:1137px" width="110" height="20" viewBox="1800 1137 110 20">
 <g fill="none" stroke="#333" stroke-width="1.5"><ellipse cx="1815" cy="1142.5" rx="6" ry="4"/><ellipse cx="1815" cy="1142.5" rx="2.5" ry="1"/><path d="M1821,1142.5 v7 c0,3 -2,4.5 -5,4.5 h-13 v-6 h10"/><path d="M1806,1151 v2 M1809,1151 v2 M1812,1151 v2 M1815,1151 v2"/>
 <path d="M1842.5,1154 c0,-8 5,-14 11.5,-14 s11.5,6 11.5,14z"/><path d="M1847,1153 c0,-5 3,-9 7,-9 s7,4 7,9"/><path d="M1851,1153 c0,-2 1.5,-3.5 3,-3.5 s3,1.5 3,3.5"/>
 <path d="M1896,1139 v14 M1888,1139 h16" stroke-width="2"/><path d="M1888,1149 l2.5,-9 l2.5,9z M1899,1149 l2.5,-9 l2.5,9z"/><path d="M1887.5,1155 h17" stroke-width="2.2"/></g>
</svg>

</body></html>
